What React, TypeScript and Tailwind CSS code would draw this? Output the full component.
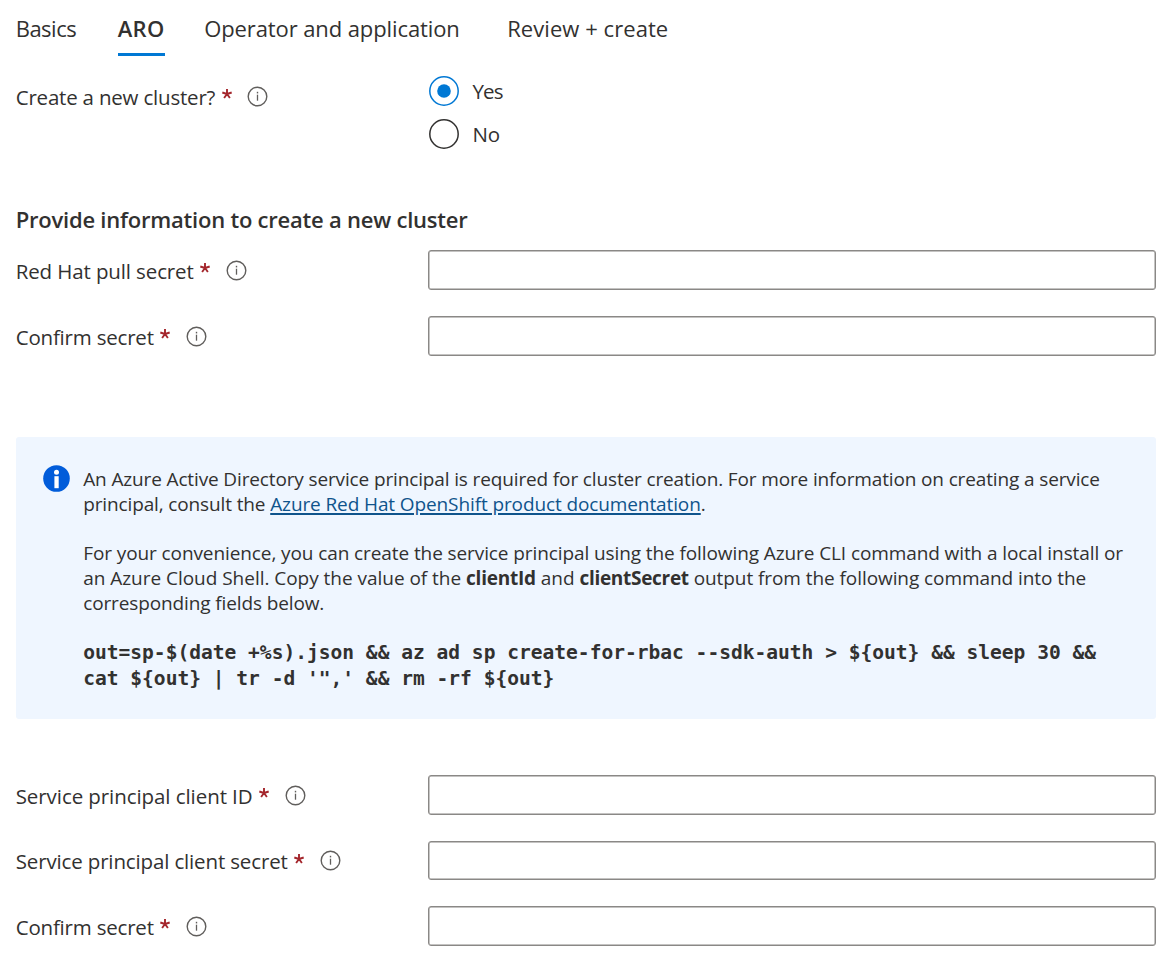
import type { ReactNode } from 'react';

function InfoOutline() {
  return (
    <svg className="size-[21px] shrink-0" viewBox="0 0 21 21" fill="none" stroke="#605e5c">
      <circle cx="10.5" cy="10.5" r="9.3" strokeWidth="1.4" />
      <path d="M10.5 8.7v6" strokeWidth="1.3" />
      <path d="M10.5 5.8v1.6" strokeWidth="1.4" />
    </svg>
  );
}

function FieldLabel({ text, tracking }: { text: string; tracking: string }) {
  return (
    <div className="flex h-10 w-[412px] shrink-0 items-center text-[20.5px]">
      <span className={`whitespace-nowrap ${tracking}`}>{text}</span>
      <svg className="-mt-1.5 ml-[6.5px] size-[10px] shrink-0" viewBox="0 0 10 10" stroke="#a4262c" strokeWidth="1.9">
        <path d="M5 5V0M5 5L.3 3.5M5 5L9.7 3.5M5 5L2.1 9M5 5L7.9 9" />
      </svg>
      <span className="-mt-0.5 ml-[15.5px] flex">
        <InfoOutline />
      </span>
    </div>
  );
}

function Field({ text, tracking }: { text: string; tracking: string }) {
  return (
    <div className="flex h-10 items-start">
      <div className="pt-px">
        <FieldLabel text={text} tracking={tracking} />
      </div>
      <input type="password" aria-label={text} className="h-[39.5px] w-[728.5px] rounded-[3px] border border-[#8a8886] bg-white px-3 shadow-[inset_0_0_0_0.5px_#8a8886] outline-none" />
    </div>
  );
}

function Radio({ text, checked, tracking }: { text: string; checked?: boolean; tracking: string }) {
  return (
    <div className="flex h-[30px] items-center gap-[13.5px] text-[20.5px]">
      <svg className="size-[30px]" viewBox="0 0 30 30" fill="none">
        <circle cx="15" cy="15" r="14.2" stroke={checked ? '#0078d4' : '#323130'} strokeWidth="1.5" />
        {checked && <circle cx="15" cy="15" r="6.8" fill="#0078d4" />}
      </svg>
      <span className={tracking}>{text}</span>
    </div>
  );
}

function Line({ children, tracking }: { children: ReactNode; tracking: string }) {
  return <span className={`block whitespace-nowrap ${tracking}`}>{children}</span>;
}

export default function App() {
  return (
    <main className="h-[962px] w-[1171px] overflow-hidden bg-white pl-[15.7px] font-['Open_Sans','Noto_Sans',sans-serif] text-[#323130]">
      <nav className="flex h-14 items-start text-[22px]">
        <div className="w-[102px] pt-3 leading-8 tracking-[-0.5px]">Basics</div>
        <div className="mr-[39.5px] h-14 w-[47px] border-b-[3px] border-[#0078d4] pt-3 leading-8 font-semibold tracking-[0.35px]">ARO</div>
        <div className="w-[303px] pt-3 leading-8 tracking-[-0.1px]">Operator and application</div>
        <div className="pt-3 leading-8 tracking-[0.06px]">Review + create</div>
      </nav>

      <div className="flex h-[146px] pt-5">
        <div className="pt-[1.3px]">
          <FieldLabel text="Create a new cluster?" tracking="tracking-[-0.2px]" />
        </div>
        <div className="ml-[1.3px] flex flex-col gap-[13px]">
          <Radio text="Yes" checked tracking="tracking-[-0.9px]" />
          <Radio text="No" tracking="tracking-[-0.2px]" />
        </div>
      </div>

      <h2 className="h-12 text-[22px] leading-[34px] font-semibold tracking-[-0.22px]">Provide information to create a new cluster</h2>
      <div className="flex flex-col gap-[26px]">
        <Field text="Red Hat pull secret" tracking="tracking-[-0.12px]" />
        <Field text="Confirm secret" tracking="tracking-[-0.2px]" />
      </div>

      <section className="mt-[81px] flex h-[282px] w-[1140px] rounded-[3px] bg-[#eff6ff] pt-[30px] pl-[27.5px]">
        <svg className="mt-[-2px] mr-[13px] size-[27px] shrink-0" viewBox="0 0 27 27">
          <circle cx="13.5" cy="13.5" r="13.3" fill="#015cda" />
          <circle cx="13.5" cy="7.2" r="2.5" fill="#fff" />
          <path d="M11.4 11.2h4.3v12h-4.3z" fill="#fff" />
        </svg>
        <div className="text-[19px] leading-[24.7px]">
          <p className="mb-[24.7px]">
            <Line tracking="tracking-[-0.136px]">An Azure Active Directory service principal is required for cluster creation. For more information on creating a service</Line>
            <Line tracking="tracking-[-0.13px]">
              principal, consult the{' '}
              <a href="#" className="tracking-[-0.11px] text-[#0f548c] underline decoration-[1.5px] underline-offset-[2px]">Azure Red Hat OpenShift product documentation</a>.
            </Line>
          </p>
          <p className="mb-[24.3px]">
            <Line tracking="tracking-[-0.095px]">For your convenience, you can create the service principal using the following Azure CLI command with a local install or</Line>
            <Line tracking="tracking-[-0.03px]">
              an Azure Cloud Shell. Copy the value of the <b className="tracking-[-0.22px]">clientId</b> and <b className="tracking-[-0.3px]">clientSecret</b>
              <span className="tracking-[-0.07px]"> output from the following command into the</span>
            </Line>
            <Line tracking="tracking-[-0.123px]">corresponding fields below.</Line>
          </p>
          <pre className="font-['DejaVu_Sans_Mono',monospace] text-[19.57px] leading-[26.6px] font-bold">{`out=sp-$(date +%s).json && az ad sp create-for-rbac --sdk-auth > \${out} && sleep 30 &&
cat \${out} | tr -d '",' && rm -rf \${out}`}</pre>
        </div>
      </section>

      <div className="mt-14 flex flex-col gap-[25.7px]">
        <Field text="Service principal client ID" tracking="tracking-[-0.07px]" />
        <Field text="Service principal client secret" tracking="tracking-[-0.145px]" />
        <Field text="Confirm secret" tracking="tracking-[-0.2px]" />
      </div>
    </main>
  );
}
